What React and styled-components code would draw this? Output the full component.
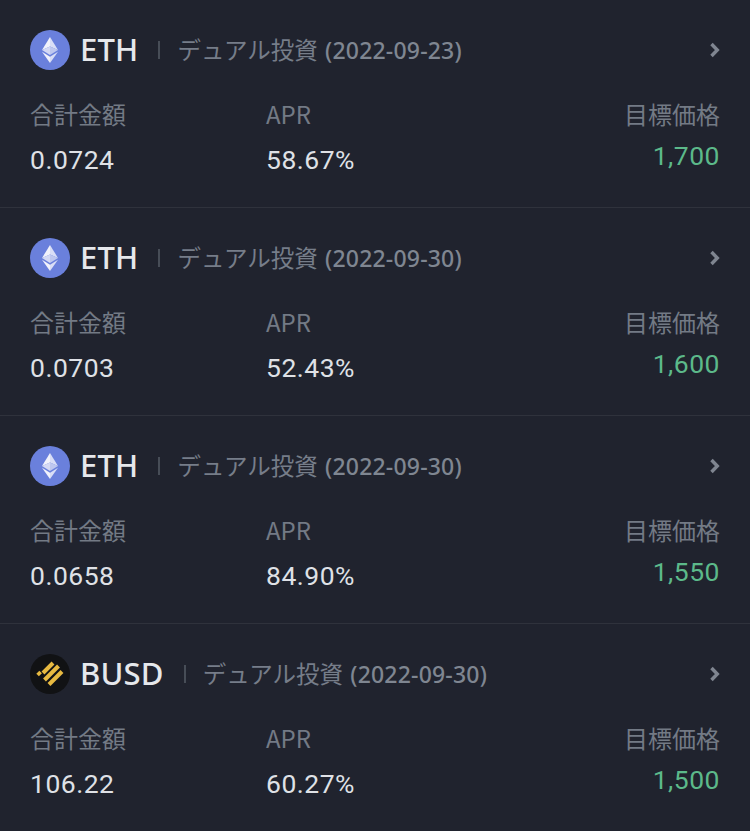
import React from "react";
import styled, { createGlobalStyle } from "styled-components";

const Global = createGlobalStyle`
  html, body { margin: 0; padding: 0; background: #20232e; }
`;

const Page = styled.div`
  width: 750px;
  height: 831px;
  overflow: hidden;
  background: #20232e;
  font-family: "Noto Sans CJK JP", "Noto Sans", sans-serif;
`;

const Row = styled.section`
  box-sizing: border-box;
  height: 208px;
  padding: 29px 30px 0;
  border-bottom: 1px solid #2f323c;
  &:last-child { border-bottom: 0; }
`;

const Header = styled.header`
  display: flex;
  align-items: center;
  height: 41px;
`;

const CoinIcon = styled.svg`
  width: 40px;
  height: 40px;
  flex: none;
  margin: 1px 10px 0 0;
`;

const Symbol = styled.span`
  font-family: "Noto Sans", sans-serif;
  font-size: 31px;
  line-height: 41px;
  font-weight: 500;
  letter-spacing: 0.2px;
  color: #e6e8ec;
`;

const Separator = styled.span`
  width: 2px;
  height: 18px;
  background: #474d57;
  margin: 0 17px 0 20px;
  flex: none;
`;

const Product = styled.span`
  font-size: 23.5px;
  line-height: 41px;
  color: #767d89;
  flex: 1;
  white-space: nowrap;
`;

const DateText = styled.span`
  font-family: "Noto Sans", sans-serif;
  font-size: 23px;
  font-weight: 500;
  color: #7f8691;
  letter-spacing: 0.2px;
  margin-left: 2px;
`;

const Chevron = styled.svg`
  width: 14px;
  height: 18px;
  flex: none;
  margin-right: -1px;
`;

const Stats = styled.div`
  display: grid;
  grid-template-columns: 236px 1fr auto;
  margin-top: 26px;
`;

const Stat = styled.div`
  display: flex;
  flex-direction: column;
  align-items: ${(p) => (p.$right ? "flex-end" : "flex-start")};
`;

const Label = styled.span`
  font-size: 24px;
  line-height: 36px;
  color: #737a85;
  white-space: nowrap;
`;

const Value = styled.span`
  font-family: "Roboto", sans-serif;
  font-size: 26.5px;
  line-height: 36px;
  letter-spacing: 0.5px;
  margin-top: ${(p) => (p.$up ? "6px" : "10px")};
  color: ${(p) => p.$color || "#dfe1e6"};
`;

const EthIcon = () => (
  <CoinIcon viewBox="0 0 40 40">
    <circle cx="20" cy="20" r="20" fill="#6a80dc" />
    <path d="M20 7 L12 20 L20 16.5 Z" fill="#f1f2fb" />
    <path d="M20 7 L28 20 L20 16.5 Z" fill="#d9def6" />
    <path d="M12 20 L20 25 L20 16.5 Z" fill="#d4d9f4" />
    <path d="M28 20 L20 25 L20 16.5 Z" fill="#bec7ef" />
    <path d="M12 21.8 L20 33 L20 26.8 Z" fill="#f1f2fb" />
    <path d="M28 21.8 L20 33 L20 26.8 Z" fill="#d9def6" />
  </CoinIcon>
);

const BusdIcon = () => (
  <CoinIcon viewBox="0 0 40 40">
    <circle cx="20" cy="20" r="20" fill="#111214" />
    <g stroke="#e8ba41" strokeWidth="4" fill="none">
      <path d="M13 19 L23 9" />
      <path d="M14.5 26 L28.5 12" />
      <path d="M19 30.5 L32 17.5" />
      <path d="M7.6 21 L10.6 18" strokeWidth="3.6" />
    </g>
  </CoinIcon>
);

const rows = [
  { coin: "ETH", date: "2022-09-23", amount: "0.0724", apr: "58.67%", target: "1,700" },
  { coin: "ETH", date: "2022-09-30", amount: "0.0703", apr: "52.43%", target: "1,600" },
  { coin: "ETH", date: "2022-09-30", amount: "0.0658", apr: "84.90%", target: "1,550" },
  { coin: "BUSD", date: "2022-09-30", amount: "106.22", apr: "60.27%", target: "1,500" },
];

export default function App() {
  return (
    <Page>
      <Global />
      {rows.map((r, i) => (
        <Row key={i}>
          <Header>
            {r.coin === "ETH" ? <EthIcon /> : <BusdIcon />}
            <Symbol>{r.coin}</Symbol>
            <Separator />
            <Product>
              デュアル投資 <DateText>({r.date})</DateText>
            </Product>
            <Chevron viewBox="0 0 14 18">
              <path d="M4.5 3 L10.3 9 L4.5 15" fill="none" stroke="#7f8590" strokeWidth="3.4" />
            </Chevron>
          </Header>
          <Stats>
            <Stat>
              <Label>合計金額</Label>
              <Value>{r.amount}</Value>
            </Stat>
            <Stat>
              <Label>APR</Label>
              <Value>{r.apr}</Value>
            </Stat>
            <Stat $right>
              <Label>目標価格</Label>
              <Value $up $color="#5cb98a">{r.target}</Value>
            </Stat>
          </Stats>
        </Row>
      ))}
    </Page>
  );
}
